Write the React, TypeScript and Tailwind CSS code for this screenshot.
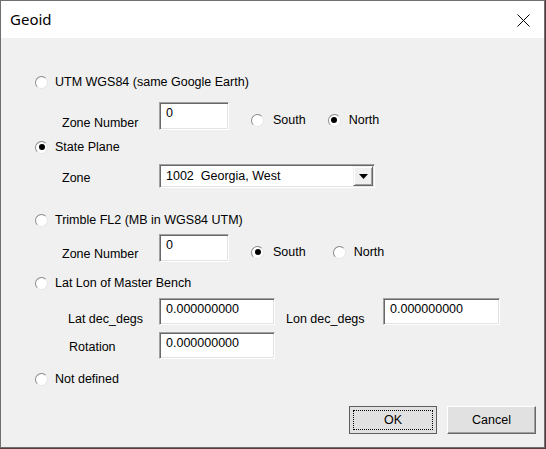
import React from 'react';

const FONT = { fontFamily: '"Liberation Sans", Arial, sans-serif' };

function Radio({ checked = false }: { checked?: boolean }) {
  return (
    <span className="relative flex h-[13px] w-[13px] shrink-0 items-center justify-center rounded-full border border-t-[#8a8a8a] border-l-[#8a8a8a] border-r-[#e6e6e6] border-b-[#e6e6e6] bg-white">
      {checked && <span className="h-[6px] w-[6px] rounded-full bg-black" />}
    </span>
  );
}

function RadioLabel({ checked, label, gap = 'gap-[7px]' }: { checked?: boolean; label: string; gap?: string }) {
  return (
    <div className={`flex h-4 items-center ${gap}`}>
      <Radio checked={checked} />
      <span className="leading-4">{label}</span>
    </div>
  );
}

/** Classic sunken edit box */
function Edit({ value, w, h = 'h-[28px]' }: { value: string; w: string; h?: string }) {
  return (
    <div
      className={`${w} ${h} shrink-0 border border-t-[#a0a0a0] border-l-[#a0a0a0] border-r-white border-b-white bg-white pl-[6px] pt-[2px] leading-4 shadow-[inset_1px_1px_0_#696969,inset_-1px_-1px_0_#e3e3e3]`}
    >
      {value}
    </div>
  );
}

export default function App() {
  return (
    <div className="h-[449px] w-[546px] bg-[#5a3b3b] text-[12.5px] text-black" style={FONT}>
      <div className="flex h-[448px] w-[545px] flex-col border border-[#6f6f6f] bg-[#f0f0f0]">
        {/* title bar */}
        <div className="flex h-[37px] shrink-0 items-center justify-between bg-white pl-[9px] pr-[14px]">
          <span className="text-[15px]" style={{ fontFamily: '"Segoe UI", "Noto Sans", sans-serif' }}>
            Geoid
          </span>
          <svg width="13" height="13" viewBox="0 0 13 13" className="mt-[1px]">
            <path d="M0.5 0.5 L12.5 12.5 M12.5 0.5 L0.5 12.5" stroke="#000" strokeWidth="1" />
          </svg>
        </div>

        {/* body */}
        <div className="flex flex-col">
          {/* UTM */}
          <div className="mt-[36px] pl-[34px]">
            <RadioLabel label="UTM WGS84 (same Google Earth)" />
          </div>
          <div className="flex h-[28px] mt-[12px] pl-[61px]">
            <span className="mt-[13px] w-[97px] leading-4">Zone Number</span>
            <Edit value="0" w="w-[70px]" />
            <div className="ml-[22px] mt-[10px]">
              <RadioLabel label="South" gap="gap-[9px]" />
            </div>
            <div className="ml-[22px] mt-[10px]">
              <RadioLabel checked label="North" gap="gap-[8px]" />
            </div>
          </div>

          {/* State Plane */}
          <div className="mt-[9px] pl-[34px]">
            <RadioLabel checked label="State Plane" />
          </div>
          <div className="flex h-[24px] mt-[9px] pl-[61px]">
            <span className="mt-[6px] w-[97px] leading-4">Zone</span>
            <div className="flex h-[24px] w-[216px] border border-t-[#a0a0a0] border-l-[#a0a0a0] border-r-white border-b-white bg-white shadow-[inset_1px_1px_0_#696969,inset_-1px_-1px_0_#e3e3e3]">
              <span className="flex-1 pl-[6px] pt-[3px] leading-4 whitespace-pre">1002  Georgia, West</span>
              <div className="mb-[1px] mr-[1px] mt-[1px] flex w-[20px] items-center justify-center border border-t-[#f0f0f0] border-l-[#f0f0f0] border-r-[#696969] border-b-[#696969] bg-[#f0f0f0] shadow-[inset_1px_1px_0_#ffffff,inset_-1px_-1px_0_#a0a0a0]">
                <svg width="9" height="5" viewBox="0 0 9 5">
                  <path d="M0 0 H9 L4.5 5 Z" fill="#000" />
                </svg>
              </div>
            </div>
          </div>

          {/* Trimble */}
          <div className="mt-[24px] pl-[34px]">
            <RadioLabel label="Trimble FL2 (MB in WGS84 UTM)" />
          </div>
          <div className="flex h-[28px] mt-[6px] pl-[61px]">
            <span className="mt-[12px] w-[97px] leading-4">Zone Number</span>
            <Edit value="0" w="w-[70px]" />
            <div className="ml-[22px] mt-[10px]">
              <RadioLabel checked label="South" gap="gap-[9px]" />
            </div>
            <div className="ml-[27px] mt-[10px]">
              <RadioLabel label="North" gap="gap-[8px]" />
            </div>
          </div>

          {/* Lat Lon */}
          <div className="mt-[13px] pl-[34px]">
            <RadioLabel label="Lat Lon of Master Bench" />
          </div>
          <div className="flex h-[27px] mt-[7px] pl-[67px]">
            <span className="mt-[13px] w-[91px] leading-4">Lat dec_degs</span>
            <Edit value="0.000000000" w="w-[116px]" h="h-[27px]" />
            <span className="ml-[11px] mt-[13px] w-[97px] leading-4">Lon dec_degs</span>
            <Edit value="0.000000000" w="w-[117px]" h="h-[27px]" />
          </div>
          <div className="flex h-[27px] mt-[7px] pl-[68px]">
            <span className="mt-[7px] w-[90px] leading-4">Rotation</span>
            <Edit value="0.000000000" w="w-[116px]" h="h-[27px]" />
          </div>

          {/* Not defined */}
          <div className="mt-[12px] pl-[34px]">
            <RadioLabel label="Not defined" />
          </div>

          {/* buttons */}
          <div className="mt-[19px] flex gap-[10px] pl-[348px]">
            <button className="flex h-[28px] w-[88px] items-center justify-center border border-[#5f5f5f] bg-[#e1e1e1] p-[3px]">
              <span className="flex h-full w-full items-center justify-center border border-dotted border-black">OK</span>
            </button>
            <button className="flex h-[28px] w-[89px] items-center justify-center border border-t-white border-l-white border-r-[#696969] border-b-[#696969] bg-[#e1e1e1] shadow-[inset_-1px_-1px_0_#a0a0a0]">
              Cancel
            </button>
          </div>
        </div>
      </div>
    </div>
  );
}
